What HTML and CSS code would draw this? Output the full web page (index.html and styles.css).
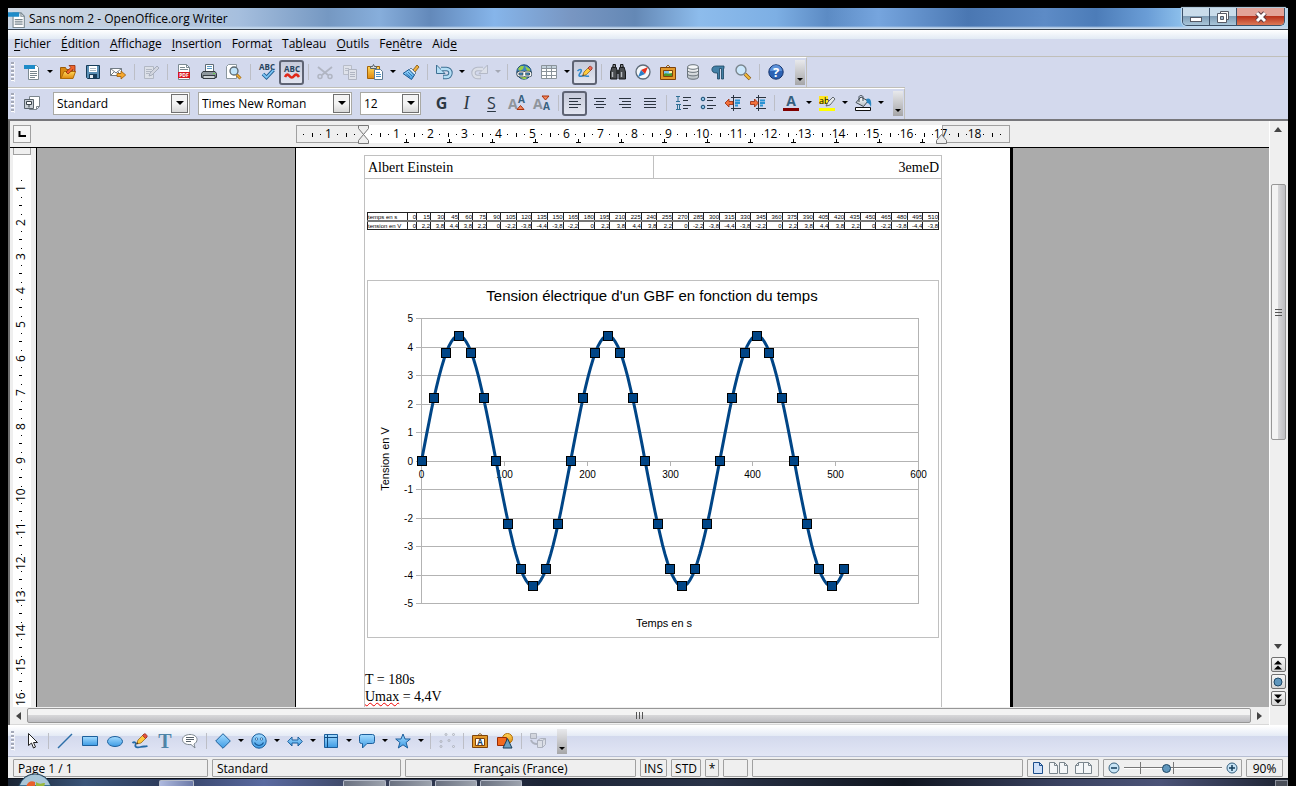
FILE: index.html
```html
<!DOCTYPE html>
<html lang="fr">
<head>
    <meta charset="UTF-8">
    <meta name="viewport" content="width=device-width, initial-scale=1.0">
    <title>Sans nom 2 - OpenOffice.org Writer</title>
    <link rel="stylesheet" href="styles.css">
</head>
<body>
    <!-- Shared gradients for the icons -->
    <svg class="defs" width="0" height="0" aria-hidden="true">
        <defs>
            <linearGradient id="blue" x1="0" y1="0" x2="0" y2="1"><stop offset="0" stop-color="#a5dcff"/><stop offset="1" stop-color="#3d9be4"/></linearGradient>
            <linearGradient id="gold" x1="0" y1="0" x2="0" y2="1"><stop offset="0" stop-color="#ffd85a"/><stop offset="1" stop-color="#e08a10"/></linearGradient>
            <linearGradient id="metal" x1="0" y1="0" x2="0" y2="1"><stop offset="0" stop-color="#ffffff"/><stop offset="1" stop-color="#b4bcc2"/></linearGradient>
        </defs>
    </svg>

    <div class="window">
        <header class="titlebar">
            <svg width="18" height="18" viewBox="0 0 16 16"><path d="M4.500 2.500h7l3 3v10h-10z" fill="#fff" stroke="#7c8a92"/><path d="M11.500 2.500v3h3" fill="none" stroke="#7c8a92"/><path d="M0 2h10v4H0z" fill="#1e8bc8"/><path d="M6 8.500h7M6 10.500h7M6 12.500h7" stroke="#75848c"/></svg>
            <span class="title">Sans nom 2 - OpenOffice.org Writer</span>
            <div class="win-buttons">
                <button class="win-min" aria-label="Réduire"><svg width="14" height="12" viewBox="0 0 14 12"><rect x="1.500" y="6.500" width="11" height="4" fill="#fff" stroke="#555a66"/></svg></button>
                <button class="win-max" aria-label="Niveau inférieur"><svg width="14" height="14" viewBox="0 0 14 14"><path d="M4.500 1.500h8v8h-8z" fill="#fff" stroke="#555a66"/><path d="M1.500 3.500h9v9h-9z" fill="#fff" stroke="#555a66"/><path d="M4.500 6.500h3v3h-3z" fill="#9fb8cc" stroke="#555a66"/></svg></button>
                <button class="win-close" aria-label="Fermer"><svg width="14" height="12" viewBox="0 0 14 12"><path d="M3 2l8 8M11 2l-8 8" stroke="#5b3a40" stroke-width="5"/><path d="M3 2l8 8M11 2l-8 8" stroke="#fff" stroke-width="3"/></svg></button>
            </div>
        </header>

        <nav class="menubar">
            <button><u>F</u>ichier</button>
            <button><u>É</u>dition</button>
            <button><u>A</u>ffichage</button>
            <button><u>I</u>nsertion</button>
            <button>Forma<u>t</u></button>
            <button>Ta<u>b</u>leau</button>
            <button><u>O</u>utils</button>
            <button>Fe<u>n</u>être</button>
            <button>Aid<u>e</u></button>
        </nav>

        <!-- Standard toolbar -->
        <div class="toolbar">
            <span class="grip"></span>
            <button class="tool" aria-label="Nouveau"><svg viewBox="0 0 16 16"><path d="M4.500 1.500h8l2 2v12h-10z" fill="#fff" stroke="#7c8a92"/><path d="M0 1h11v4H0z" fill="#1e8bc8"/><path d="M6 7.500h7M6 9.500h7M6 11.500h7M6 13.500h5" stroke="#75848c"/></svg></button>
            <button class="arrow" aria-label="Types de document"></button>
            <button class="tool" aria-label="Ouvrir"><svg viewBox="0 0 16 16"><path d="M.5 14.500v-11h5l1 2h6v9z" fill="#d98a12" stroke="#9c5b06"/><path d="M1 14.500l3-7h11.500l-2.500 7z" fill="url(#gold)" stroke="#b06c08"/><path d="M6 8l5-4.500L9 1.500h6v6l-2-2L8 10z" fill="#f0642c" stroke="#8c2a08" stroke-width=".8"/></svg></button>
            <button class="tool" aria-label="Enregistrer"><svg viewBox="0 0 16 16"><path d="M1.500 1.500h13v13h-12l-1-1z" fill="#5a8fb5" stroke="#173c58"/><path d="M4 2h8v6H4z" fill="#fff"/><path d="M5 4.500h6M5 6.500h6" stroke="#a9b8c2"/><path d="M4 10h8v4.500H4z" fill="#173c58"/><path d="M5 11h3v3H5z" fill="#e4ecf2"/></svg></button>
            <button class="tool" aria-label="E-mail"><svg viewBox="0 0 16 16"><path d="M.5 4.500h11v7H.5z" fill="#fff" stroke="#717b84"/><path d="M.5 4.500L6 9l5.500-4.500M.5 11.500l4-4M11.500 11.500l-4-4" fill="none" stroke="#717b84"/><path d="M7 9.500h4v-2.500l4.700 4-4.700 4v-2.500H7z" fill="#f6a72c" stroke="#9c5b06" stroke-width=".8"/></svg></button>
            <span class="sep"></span>
            <button class="tool off" aria-label="Éditer"><svg viewBox="0 0 16 16"><path d="M1.500 2.500h9v12h-9z" fill="#dfe2e8" stroke="#aab0bb"/><path d="M3 5.500h6M3 7.500h5M3 9.500h3" stroke="#aab0bb"/><path d="M6 12l1-3 7-7 2 2-7 7z" fill="#d2d5dc" stroke="#9da4b0"/></svg></button>
            <span class="sep"></span>
            <button class="tool" aria-label="Exporter au format PDF"><svg viewBox="0 0 16 16"><path d="M2.500 .5h8l3 3v12h-11z" fill="#fff" stroke="#7c8a92"/><path d="M10.500 .5v3h3" fill="none" stroke="#7c8a92"/><path d="M4 3.500h5M4 5.500h8" stroke="#7c8a92"/><path d="M2 8h12v6H2z" fill="#d8141c"/><text x="8" y="13" class="pdf">PDF</text></svg></button>
            <button class="tool" aria-label="Imprimer"><svg viewBox="0 0 16 16"><path d="M4.500 7.500v-7h8v7" fill="#fff" stroke="#5f6b74"/><path d="M6 2.500h5M6 4.500h5" stroke="#5c9cc6"/><path d="M2 7.500h12l1.500 2v4H.5v-4z" fill="#8f989e" stroke="#353c42"/><path d="M2 11.500h12v3H2z" fill="#cdd3d6" stroke="#353c42"/><path d="M12 9h2v1h-2z" fill="#63d047"/></svg></button>
            <button class="tool" aria-label="Aperçu"><svg viewBox="0 0 16 16"><path d="M.5 2.500l2-2h8v14H.5z" fill="#fff" stroke="#8b979f"/><path d="M10.500 10.500l4 4" stroke="#9b6412" stroke-width="3"/><path d="M10.500 10.500l4 4" stroke="#f0b13a" stroke-width="1.500"/><circle cx="8" cy="7" r="4" fill="#bfe3fa" stroke="#5b6870" stroke-width="1.300"/></svg></button>
            <span class="sep"></span>
            <button class="tool" aria-label="Orthographe et grammaire"><svg viewBox="0 0 16 16"><text x="8" y="6" class="abc">ABC</text><path d="M4 10l3.500 3.500L14.500 6" fill="none" stroke="#1f5d92" stroke-width="3.600"/><path d="M4 10l3.500 3.500L14.500 6" fill="none" stroke="#7cc5f5" stroke-width="1.800"/></svg></button>
            <button class="tool on" aria-label="Vérification automatique"><svg viewBox="0 0 16 16"><text x="8" y="8" class="abc">ABC</text><path d="M1 13c1.500-3 3-3 4.500-1s3 2 4.500 0 3-2 5 1" fill="none" stroke="#e02818" stroke-width="2.600"/></svg></button>
            <span class="sep"></span>
            <button class="tool off" aria-label="Couper"><svg viewBox="0 0 16 16"><path d="M1 3l10 8M15 3L5 11" stroke="#a8adb8" stroke-width="1.800"/><circle cx="3" cy="12.500" r="2" fill="none" stroke="#a8adb8" stroke-width="1.500"/><circle cx="13" cy="12.500" r="2" fill="none" stroke="#a8adb8" stroke-width="1.500"/></svg></button>
            <button class="tool off" aria-label="Copier"><svg viewBox="0 0 16 16"><path d="M1.500 1.500h8v9h-8z" fill="#e3e5ea" stroke="#b2b7c0"/><path d="M3 4.500h4M3 6.500h3" stroke="#b2b7c0"/><path d="M6.500 5.500h8v10h-8z" fill="#e3e5ea" stroke="#a8adb8"/><path d="M8 8.500h5M8 10.500h5M8 12.500h5" stroke="#a8adb8"/></svg></button>
            <button class="tool" aria-label="Coller"><svg viewBox="0 0 16 16"><path d="M.5 2.500h12v12H.5z" fill="url(#gold)" stroke="#a56408"/><path d="M3.500 4.500v-2h2l1-2 1 2h2v2z" fill="#d5dade" stroke="#59636b"/><path d="M7.500 5.500h6l2 2v8h-8z" fill="#fff" stroke="#5e7c94"/><path d="M9 8.500h4M9 10.500h5M9 12.500h5" stroke="#4b8fc4"/></svg></button>
            <button class="arrow" aria-label="Collage spécial"></button>
            <button class="tool" aria-label="Pinceau"><svg viewBox="0 0 16 16"><path d="M10 6l4-5 2 2-4 5z" fill="#f0b040" stroke="#7d5208" stroke-width=".8"/><path d="M8 4l5 5-2 2-5-5z" fill="#e8edf2" stroke="#4b6a84" stroke-width=".8"/><path d="M6 5.500l5.500 5.500-3 4.500L0 9.500z" fill="url(#blue)" stroke="#19588f"/><path d="M3 9.500l4 3.500M5 8l4.500 4.500" stroke="#19588f" stroke-width=".7"/></svg></button>
            <span class="sep"></span>
            <button class="tool" aria-label="Annuler"><svg viewBox="0 0 16 16"><path d="M5 5h5.500a3.800 3.800 0 0 1 0 8H7" fill="none" stroke="#3e7093" stroke-width="4.400"/><path d="M.5 1v8.500H9L6 6.500z" fill="#b5def5" stroke="#3e7093"/><path d="M5 5h5.500a3.800 3.800 0 0 1 0 8H7.500" fill="none" stroke="#b5def5" stroke-width="2.400"/></svg></button>
            <button class="arrow" aria-label="Liste des annulations"></button>
            <button class="tool off" aria-label="Restaurer"><svg viewBox="0 0 16 16"><path d="M11 5H5.500a3.800 3.800 0 0 0 0 8H9" fill="none" stroke="#adb2be" stroke-width="4.400"/><path d="M15.500 1v8.500H7l3-3z" fill="#dde1e8" stroke="#adb2be"/><path d="M11 5H5.500a3.800 3.800 0 0 0 0 8h3" fill="none" stroke="#dde1e8" stroke-width="2.400"/></svg></button>
            <button class="arrow pale" aria-label="Liste des restaurations"></button>
            <span class="sep"></span>
            <button class="tool" aria-label="Hyperlien"><svg viewBox="0 0 16 16"><circle cx="8" cy="8" r="7.200" fill="#3c86c4" stroke="#1c4d78"/><path d="M2 5c2-4 5-3 6-3l-1 3-3 2zM9 2l5 3v4l-3-2zM4 13l3-3 5 1-2 4c-3 .5-4-.5-6-2z" fill="#9ccf4a"/><rect x="1.800" y="8" width="7" height="4" rx="2" fill="none" stroke="#33434d" stroke-width="2.600"/><rect x="7.800" y="8" width="7" height="4" rx="2" fill="none" stroke="#33434d" stroke-width="2.600"/><rect x="1.800" y="8" width="7" height="4" rx="2" fill="none" stroke="#fff" stroke-width="1.200"/><rect x="7.800" y="8" width="7" height="4" rx="2" fill="none" stroke="#fff" stroke-width="1.200"/></svg></button>
            <button class="tool" aria-label="Tableau"><svg viewBox="0 0 16 16"><path d="M.5 1.500h15v13H.5z" fill="#fff" stroke="#8a939a"/><path d="M1 2h14v2H1z" fill="#c4d2dc"/><path d="M.5 4.500h15M.5 7.500h15M.5 11.500h15M5.500 1.500v13M10.500 1.500v13" stroke="#8a939a"/></svg></button>
            <button class="arrow" aria-label="Taille du tableau"></button>
            <button class="tool on" aria-label="Afficher les fonctions de dessin"><svg viewBox="0 0 16 16"><path d="M.5 7c3-3 5-1 3 1.500S1 13 5 12s4 1 7 0" fill="none" stroke="#2f87cc" stroke-width="1.600"/><path d="M5.500 12l1.500-4 5.500-5.500 2.500 2.500L9.500 10.500z" fill="#ffcc3c" stroke="#8a5a10" stroke-width=".7"/><path d="M11 4l1.500-1.500c1-1 3.500 1 2.500 2.500L13.500 6.500z" fill="#ee6a58" stroke="#8a2a20" stroke-width=".7"/><path d="M5.500 12l.7-1.800 1 1z" fill="#333"/></svg></button>
            <span class="sep"></span>
            <button class="tool" aria-label="Rechercher &amp; remplacer"><svg viewBox="0 0 16 16"><path d="M2 3h4l1 3v9H.5V8zM10 3h4l1.500 5v7H9V6z" fill="#4a4d50" stroke="#16181a"/><path d="M3 .5h2.500v3H3zM10.500 .5H13v3h-2.500z" fill="#85898c" stroke="#16181a"/><path d="M6.500 6h3v4h-3z" fill="#2b2e30"/><path d="M2.500 8v5M11.500 8v5" stroke="#b8bcc0" stroke-width="1.400"/></svg></button>
            <button class="tool" aria-label="Navigateur"><svg viewBox="0 0 16 16"><circle cx="8" cy="8" r="7" fill="#f4f7fa" stroke="#5d6b78" stroke-width="1.300"/><path d="M13 3L6 6l4 4z" fill="#e8321e"/><path d="M3 13l3-7 4 4z" fill="#2a7fc8"/></svg></button>
            <button class="tool" aria-label="Gallery"><svg viewBox="0 0 16 16"><path d="M5 4l3-3 3 3" fill="none" stroke="#96601a"/><path d="M.5 3.500h15v12H.5z" fill="#e39a2b" stroke="#7f430a"/><path d="M3.500 6.500h9v6h-9z" fill="#7cc3f0" stroke="#7f430a"/><path d="M4 10c2-2 4 1 8-1v3H4z" fill="#4e9a2a"/><path d="M9 7h3v2H9z" fill="#fff7a0"/></svg></button>
            <button class="tool" aria-label="Sources de données"><svg viewBox="0 0 16 16"><path d="M2.500 3v10c0 3 11 3 11 0V3" fill="url(#metal)" stroke="#6b757c"/><ellipse cx="8" cy="3" rx="5.500" ry="2.300" fill="#f4f6f8" stroke="#6b757c"/><path d="M2.500 6.500c0 2.500 11 2.500 11 0M2.500 10c0 2.500 11 2.500 11 0" fill="none" stroke="#6b757c"/></svg></button>
            <button class="tool" aria-label="Caractères non imprimables"><svg viewBox="0 0 16 16"><path d="M14 2H6C.5 2 .5 9 6 9h1.500v6h2V4.500h2V15h2V4.500H14z" fill="#4280a6" stroke="#1b4460" stroke-width=".8"/></svg></button>
            <button class="tool" aria-label="Zoom"><svg viewBox="0 0 16 16"><path d="M10 10l5 5" stroke="#8a5a10" stroke-width="3.600"/><path d="M10 10l4.700 4.700" stroke="#f4bb3c" stroke-width="2"/><circle cx="6" cy="6" r="5" fill="#cbe7fb" stroke="#7a858c" stroke-width="1.400"/></svg></button>
            <span class="sep"></span>
            <button class="tool" aria-label="Aide"><svg viewBox="0 0 16 16"><circle cx="8" cy="8" r="7.200" fill="#2c62b4" stroke="#15336c"/><path d="M2 7a6 6 0 0 1 12 0z" fill="#5d92da"/><text x="8" y="13" class="help">?</text></svg></button>
            <button class="more" aria-label="Autres boutons"></button>
        </div>

        <!-- Formatting toolbar -->
        <div class="toolbar">
            <span class="grip"></span>
            <button class="tool" aria-label="Styles et formatage"><svg viewBox="0 0 16 16"><path d="M5.500 1.500h10v10l-3 3h-7z" fill="#fff" stroke="#7b858d"/><path d="M15.500 11.500h-3v3" fill="none" stroke="#7b858d"/><path d="M.5 4.500h9v9h-9z" fill="#c8ced4" stroke="#59636b"/><path d="M2.500 6.500h5v3h-5zM5 9.500v3" fill="#fff" stroke="#3b444b"/></svg></button>
            <div class="combo combo-style"><select aria-label="Appliquer le style"><option>Standard</option></select><span class="drop"></span></div>
            <div class="combo combo-font"><select aria-label="Nom de police"><option>Times New Roman</option></select><span class="drop"></span></div>
            <div class="combo combo-size"><select aria-label="Taille de police"><option>12</option></select><span class="drop"></span></div>
            <button class="tool letter bold">G</button>
            <button class="tool letter italic">I</button>
            <button class="tool letter under">S</button>
            <button class="tool" aria-label="Augmenter la police"><svg viewBox="0 0 16 16"><text x="-1" y="14" class="big-a">A</text><text x="9" y="8" class="small-a">A</text><path d="M8 14.500l3.500-4 3.500 4z" fill="#f4855a" stroke="#a8320c"/></svg></button>
            <button class="tool" aria-label="Réduire la police"><svg viewBox="0 0 16 16"><text x="-1" y="14" class="big-a">A</text><text x="9" y="15" class="small-a">A</text><path d="M8 1h7l-3.500 4z" fill="#f4855a" stroke="#a8320c"/></svg></button>
            <span class="sep"></span>
            <button class="tool on" aria-label="Aligner à gauche"><svg viewBox="0 0 16 16"><path d="M2 3.500h12M2 6.500h9M2 9.500h12M2 12.500h9" stroke="#2b3440"/></svg></button>
            <button class="tool" aria-label="Centrer"><svg viewBox="0 0 16 16"><path d="M2 3.500h12M4 6.500h8M2 9.500h12M4 12.500h8" stroke="#2b3440"/></svg></button>
            <button class="tool" aria-label="Aligner à droite"><svg viewBox="0 0 16 16"><path d="M2 3.500h12M5 6.500h9M2 9.500h12M5 12.500h9" stroke="#2b3440"/></svg></button>
            <button class="tool" aria-label="Justifié"><svg viewBox="0 0 16 16"><path d="M2 3.500h12M2 6.500h12M2 9.500h12M2 12.500h12" stroke="#2b3440"/></svg></button>
            <span class="sep"></span>
            <button class="tool" aria-label="Numérotation"><svg viewBox="0 0 16 16"><path d="M1 1.500h4M3 2v4M1 6.500h4M1 9.500h5M2.500 10v4M4.500 10v4M1 14.500h5" stroke="#2f6f94"/><path d="M8 2.500h8M8 5.500h5M8 10.500h8M8 13.500h5" stroke="#2b3440"/></svg></button>
            <button class="tool" aria-label="Puces"><svg viewBox="0 0 16 16"><circle cx="3" cy="4" r="1.800" fill="#8dc4e6" stroke="#174a70"/><circle cx="3" cy="12" r="1.800" fill="#8dc4e6" stroke="#174a70"/><path d="M7 2.500h9M7 5.500h6M7 10.500h9M7 13.500h6" stroke="#2b3440"/></svg></button>
            <button class="tool" aria-label="Réduire le retrait"><svg viewBox="0 0 16 16"><path d="M6 2.500h10M6 13.500h10M8.500 0v16" stroke="#2b3440"/><path d="M10 5.500h5M10 8h5M10 10.500h3" stroke="#2a93d4" stroke-width="2"/><path d="M0 8l4-4v2.500h4v3H4V12z" fill="#f4703a" stroke="#96280a" stroke-width=".8"/></svg></button>
            <button class="tool" aria-label="Augmenter le retrait"><svg viewBox="0 0 16 16"><path d="M6 2.500h10M6 13.500h10M8.500 0v16" stroke="#2b3440"/><path d="M10 5.500h5M10 8h5M10 10.500h3" stroke="#2a93d4" stroke-width="2"/><path d="M8.500 8l-4-4v2.500h-4v3h4V12z" fill="#f4703a" stroke="#96280a" stroke-width=".8"/></svg></button>
            <span class="sep"></span>
            <button class="tool" aria-label="Couleur de police"><svg viewBox="0 0 16 16"><text x="8" y="11" class="mid-a">A</text><path d="M0 13h16v3H0z" fill="#800000"/></svg></button>
            <button class="arrow" aria-label="Choix de la couleur"></button>
            <button class="tool" aria-label="Surlignage"><svg viewBox="0 0 16 16"><path d="M0 1h9v8H0z" fill="#ffe620"/><text x="0" y="9" class="hl">ab</text><path d="M7 11l2-4 5-5 2 2-5 6z" fill="#e4e8ea" stroke="#565e64" stroke-width=".9"/><path d="M0 13h16v3H0z" fill="#ffff00"/></svg></button>
            <button class="arrow" aria-label="Choix du surlignage"></button>
            <button class="tool" aria-label="Couleur d'arrière-plan"><svg viewBox="0 0 16 16"><path d="M1 7.500L6 2l7 4-4.500 5.500z" fill="url(#metal)" stroke="#3f4a52"/><path d="M4 7V2c0-2 4-2 4 0v4" fill="none" stroke="#3f4a52"/><path d="M11 4c4-2 6 1 5 8-1-2-2-4-4-4z" fill="#2a86c0"/><path d="M.5 12.500h15v3H.5z" fill="#fff" stroke="#111"/></svg></button>
            <button class="arrow" aria-label="Choix de l'arrière-plan"></button>
            <button class="more" aria-label="Autres boutons"></button>
        </div>

        <!-- Document window: rulers, page, scroll bars -->
        <main class="editor">
            <div class="view">
                <div class="ruler-row">
                    <button class="tab-type" aria-label="Type de tabulation"><svg width="8" height="8" viewBox="0 0 8 8"><path d="M1.500 1v5H8" fill="none" stroke="#000" stroke-width="2"/></svg></button>
                    <div class="ruler-space">
                        <div class="hruler">
                            <span class="out out-left"></span>
                            <span class="out out-right"></span>
                            <div class="hnumbers" id="hnumbers"></div>
                            <span class="tabs"></span>
                            <svg class="indent indent-left" width="12" height="19" viewBox="0 0 12 19"><path d="M.5 .5h10v3l-5 6 5 6v3H.5v-3l5-6-5-6z" fill="#eee" stroke="#777"/></svg>
                            <svg class="indent indent-right" width="12" height="19" viewBox="0 0 12 19"><path d="M5.500 9.500l5 6v3H.5v-3z" fill="#eee" stroke="#777"/></svg>
                        </div>
                    </div>
                </div>
                <div class="doc-row">
                    <div class="vruler"><span class="vout"></span><div class="vnumbers" id="vnumbers"></div></div>
                    <div class="canvas">
                        <article class="page">
                            <div class="text-area">
                                <div class="doc-header"><span>Albert Einstein</span><span class="right">3emeD</span></div>
                                <table class="data">
                                    <colgroup id="cols"><col class="c-name"><col class="c-zero"></colgroup>
                                    <tbody>
                                        <tr id="row-t"><th scope="row">temps en s</th></tr>
                                        <tr id="row-u"><th scope="row">tension en V</th></tr>
                                    </tbody>
                                </table>
                                <figure class="chart">
                                    <svg id="chart" viewBox="0 0 570 356">
                                        <text x="284" y="20" class="c-title">Tension électrique d'un GBF en fonction du temps</text>
                                        <text x="296" y="346" class="c-axis">Temps en s</text>
                                        <text transform="translate(21 178) rotate(-90)" class="c-axis">Tension en V</text>
                                    </svg>
                                </figure>
                                <div class="notes">
                                    <p>T = 180s</p>
                                    <p><span class="typo">Umax</span> = 4,4V</p>
                                </div>
                            </div>
                        </article>
                    </div>
                </div>
                <div class="hscroll">
                    <button class="sb" aria-label="Gauche"><svg width="5" height="8" viewBox="0 0 5 8"><path d="M5 0v8L0 4z" fill="#444"/></svg></button>
                    <div class="hthumb"><i></i><i></i><i></i></div>
                    <button class="sb" aria-label="Droite"><svg width="5" height="8" viewBox="0 0 5 8"><path d="M0 0v8l5-4z" fill="#444"/></svg></button>
                </div>
            </div>
            <div class="vscroll">
                <button class="sb" aria-label="Haut"><svg width="8" height="5" viewBox="0 0 8 5"><path d="M0 5h8L4 0z" fill="#444"/></svg></button>
                <div class="vtrack"><div class="vthumb"><i></i><i></i><i></i></div></div>
                <button class="sb" aria-label="Bas"><svg width="8" height="5" viewBox="0 0 8 5"><path d="M0 0h8L4 5z" fill="#444"/></svg></button>
                <button class="jump" aria-label="Page précédente"><svg width="8" height="10" viewBox="0 0 8 10"><path d="M0 4.500h8L4 .5zM0 9.500h8L4 5.500z"/></svg></button>
                <button class="jump" aria-label="Navigation"><svg width="10" height="10" viewBox="0 0 10 10"><circle cx="5" cy="5" r="4" fill="#5f96bc" stroke="#1f4866"/></svg></button>
                <button class="jump" aria-label="Page suivante"><svg width="8" height="10" viewBox="0 0 8 10"><path d="M0 .5h8L4 4.500zM0 5.500h8L4 9.500z"/></svg></button>
            </div>
        </main>

        <!-- Drawing toolbar -->
        <div class="toolbar drawbar">
            <span class="grip"></span>
            <button class="tool" aria-label="Sélection"><svg viewBox="0 0 16 16"><path d="M4.500 .5v12l3-2.500 2 5 2-1-2-4.500h4z" fill="#fff" stroke="#222"/></svg></button>
            <span class="sep"></span>
            <button class="tool" aria-label="Ligne"><svg viewBox="0 0 16 16"><path d="M1 15L15 1" stroke="#2d6fa8" stroke-width="1.400"/></svg></button>
            <button class="tool" aria-label="Rectangle"><svg viewBox="0 0 16 16"><path d="M.5 3.500h15v9H.5z" fill="url(#blue)" stroke="#1c5f9c"/></svg></button>
            <button class="tool" aria-label="Ellipse"><svg viewBox="0 0 16 16"><ellipse cx="8" cy="8.500" rx="7.500" ry="5" fill="url(#blue)" stroke="#1c5f9c"/></svg></button>
            <button class="tool" aria-label="Ligne à main levée"><svg viewBox="0 0 16 16"><path d="M.5 10c2-2 4 0 3 2s2 3 5 2 4 0 7-1" fill="none" stroke="#246ba8" stroke-width="1.800"/><path d="M4.500 11l1.500-4 6-6 3 3-6 6z" fill="#ffc83c" stroke="#8a5a10" stroke-width=".7"/><path d="M10.500 2.500L12 1c1-1 4 1.500 3 3l-1.500 1.500z" fill="#e4523e" stroke="#8a2a20" stroke-width=".7"/><path d="M4.500 11l.7-1.800 1.200 1.200z" fill="#222"/></svg></button>
            <button class="tool" aria-label="Texte"><svg viewBox="0 0 16 16"><text x="8" y="15" class="tee">T</text></svg></button>
            <button class="tool" aria-label="Légende"><svg viewBox="0 0 16 16"><path d="M8 1.500c4 0 7 2 7 5 0 2-1 3.500-3 4.500l1 4-4-3.500c-5 .5-8.500-1.500-8.500-5 0-3 3.500-5 7.500-5z" fill="#fff" stroke="#7d878f"/><path d="M4 4.500h8M4 6.500h8M4 8.500h5" stroke="#56616a"/></svg></button>
            <span class="sep"></span>
            <button class="tool" aria-label="Formes de base"><svg viewBox="0 0 16 16"><path d="M8 .7L15.300 8 8 15.300.7 8z" fill="url(#blue)" stroke="#1c5f9c"/></svg></button>
            <button class="arrow" aria-label="Plus de formes de base"></button>
            <button class="tool" aria-label="Formes des symboles"><svg viewBox="0 0 16 16"><circle cx="8" cy="8" r="7.200" fill="url(#blue)" stroke="#1c5f9c"/><circle cx="5.500" cy="6" r="1.200" fill="#e6f5ff" stroke="#1c5f9c" stroke-width=".8"/><circle cx="10.500" cy="6" r="1.200" fill="#e6f5ff" stroke="#1c5f9c" stroke-width=".8"/><path d="M3.500 9.500c2 4 7 4 9 0" fill="none" stroke="#1c5f9c" stroke-width="1.200"/></svg></button>
            <button class="arrow" aria-label="Plus de symboles"></button>
            <button class="tool" aria-label="Flèches pleines"><svg viewBox="0 0 16 16"><path d="M.7 8.500l4.300-4.500v3h6V4l4.300 4.500L11 13v-3H5v3z" fill="url(#blue)" stroke="#1c5f9c"/></svg></button>
            <button class="arrow" aria-label="Plus de flèches"></button>
            <button class="tool" aria-label="Diagrammes"><svg viewBox="0 0 16 16"><path d="M1.500 1.500h13v13h-13z" fill="url(#blue)" stroke="#1c5f9c"/><path d="M1.500 4.500h13M4.500 1.500v13" stroke="#0f4a80"/></svg></button>
            <button class="arrow" aria-label="Plus de diagrammes"></button>
            <button class="tool" aria-label="Légendes"><svg viewBox="0 0 16 16"><path d="M2.500 1.500h11q2 0 2 2v5q0 2-2 2H8L3.500 15v-4.500h-1q-2 0-2-2v-5q0-2 2-2z" fill="url(#blue)" stroke="#1c5f9c"/></svg></button>
            <button class="arrow" aria-label="Plus de légendes"></button>
            <button class="tool" aria-label="Étoiles"><svg viewBox="0 0 16 16"><path d="M8 1l2 5h5.300l-4.200 3.500 1.600 5.500L8 11.800 3.300 15l1.600-5.500L.7 6H6z" fill="url(#blue)" stroke="#1c5f9c"/></svg></button>
            <button class="arrow" aria-label="Plus d'étoiles"></button>
            <span class="sep"></span>
            <button class="tool off" aria-label="Points"><svg viewBox="0 0 16 16"><g fill="#e4e6ea" stroke="#a2a7b2"><circle cx="7" cy="1.500" r="1"/><circle cx="14.500" cy="1.500" r="1"/><circle cx="10" cy="7.500" r="1"/><circle cx="2" cy="8.500" r="1"/><circle cx="2" cy="13.500" r="1"/><circle cx="14.500" cy="13.500" r="1"/></g></svg></button>
            <span class="sep"></span>
            <button class="tool" aria-label="Galerie Fontwork"><svg viewBox="0 0 16 16"><path d="M5 3l3-2.500L11 3" fill="none" stroke="#96601a"/><path d="M.5 2.500h15v12H.5z" fill="#e39a2b" stroke="#7f430a"/><path d="M3.500 5.500h9v7h-9z" fill="#fff" stroke="#7f430a"/><text x="8" y="12" class="fw">A</text></svg></button>
            <button class="tool" aria-label="À partir d'un fichier"><svg viewBox="0 0 16 16"><circle cx="10.500" cy="5.500" r="5" fill="url(#gold)" stroke="#b06c08"/><path d="M.5 4.500h9v8h-9z" fill="#f26a1e" stroke="#9a2c04"/><path d="M10.500 5.500l4.500 9.500H6z" fill="#6ea0c0" stroke="#183e5a"/></svg></button>
            <span class="sep"></span>
            <button class="tool off" aria-label="Extrusion"><svg viewBox="0 0 16 16"><path d="M.5 .5h6v5h-6z" fill="#cfd2d9" stroke="#a2a7b2"/><path d="M1 7c1 3 3 4 6 4" fill="none" stroke="#a2a7b2" stroke-width="2"/><path d="M7.500 7.500l3-2h5v6l-3 3h-5z" fill="#dcdfe4" stroke="#a2a7b2"/><path d="M7.500 7.500h5v7M12.500 7.500l3-2" fill="none" stroke="#a2a7b2"/></svg></button>
            <button class="more" aria-label="Autres boutons"></button>
        </div>

        <footer class="status">
            <span class="cell s-page">Page 1 / 1</span>
            <span class="cell s-style">Standard</span>
            <span class="cell s-lang">Français (France)</span>
            <span class="cell s-ins">INS</span>
            <span class="cell s-std">STD</span>
            <span class="cell s-mod">*</span>
            <span class="cell s-sign"></span>
            <span class="cell s-fill"></span>
            <span class="cell s-views">
                <button aria-label="Une page"><svg width="10" height="12" viewBox="0 0 10 12"><path d="M.5 .5h6l3 3v8h-9z" fill="#cfe0f8" stroke="#1c4e8c"/><path d="M6.500 .5v3h3" fill="none" stroke="#1c4e8c"/></svg></button>
                <button aria-label="Plusieurs pages"><svg width="20" height="12" viewBox="0 0 20 12"><path d="M.5 .5h5l3 3v8h-8zM10.500 .5h5l3 3v8h-8z" fill="#f4f6f8" stroke="#7b868e"/><path d="M5.500 .5v3h3M15.500 .5v3h3" fill="none" stroke="#7b868e"/></svg></button>
                <button aria-label="Mode livre"><svg width="18" height="12" viewBox="0 0 18 12"><path d="M3.500 .5h5v11h-8v-8zM8.500 .5h5l3 3v8h-8z" fill="#f4f6f8" stroke="#7b868e"/><path d="M3.500 .5v3h-3M13.500 .5v3h3" fill="none" stroke="#7b868e"/></svg></button>
            </span>
            <span class="cell s-zoom">
                <button aria-label="Zoom arrière"><svg width="12" height="12" viewBox="0 0 12 12"><circle cx="6" cy="6" r="5" fill="#c8e4f6" stroke="#37617f"/><path d="M3 6h6" stroke="#143c5a" stroke-width="1.500"/></svg></button>
                <input type="range" min="0" max="100" value="43" aria-label="Facteur de zoom">
                <button aria-label="Zoom avant"><svg width="12" height="12" viewBox="0 0 12 12"><circle cx="6" cy="6" r="5" fill="#c8e4f6" stroke="#37617f"/><path d="M3 6h6M6 3v6" stroke="#143c5a" stroke-width="1.500"/></svg></button>
            </span>
            <span class="cell s-percent">90%</span>
        </footer>
    </div>

    <!-- Top edge of the Windows taskbar -->
    <div class="taskbar">
        <svg class="orb" width="36" height="36" viewBox="0 0 36 36"><circle cx="18" cy="18" r="17" fill="#3c6f92" stroke="#24394c"/><path d="M3 12a16 16 0 0 1 30 0z" fill="#a9c6d8"/><path d="M9 16c0-7 5-9 9-7v8z" fill="#e8602c"/><path d="M19 9c4 3 6 1 9 1l-2 8-7-1z" fill="#98b83c"/></svg>
        <span class="task t1"></span><span class="task t2"></span><span class="task t2"></span><span class="task t3"></span><span class="task t3"></span>
        <span class="desktop"></span>
    </div>

    <script src="script.js"></script>
</body>
</html>
```
FILE: styles.css
```css
* {
    box-sizing: border-box;
}

body {
    margin: 0;
    height: 100vh;
    display: flex;
    flex-direction: column;
    padding: 8px 8px 0;
    background: #000;
    color: #000;
    font-family: "Open Sans", "Noto Sans", sans-serif;
    font-size: 12px;
    overflow: hidden;
}

.defs {
    position: absolute;
}

button {
    margin: 0;
    padding: 0;
    border: none;
    background: none;
    font: inherit;
    color: inherit;
}

.window {
    flex: 1;
    min-height: 0;
    display: flex;
    flex-direction: column;
    background: #d3d9ed;
}

/* Title bar */
.titlebar {
    display: flex;
    align-items: center;
    height: 22px;
    padding-right: 3px;
    border-bottom: 1px solid #38434f;
    background:
        linear-gradient(#0000 18px, #c5d8ec 20px),
        linear-gradient(90deg, #cfd8e3 0, #bccbdd 12%, #a6bfde 18%, #7598c2 25%, #87aedb 29%, #6389ba 33%, #86b5ea 38%, #7896c2 44%, #6488b5 49%, #8dbcec 54%, #7dafe4 60%, #5c8bc4 64%, #76a5de 68%, #4a77b2 75%, #5d8bc6 81%, #4c7cb8 85%, #6a9dd6 89%, #9dd0f6 93%, #b8d5ea 100%);
}

.title {
    flex: 1;
    padding-left: 3px;
}

.win-buttons {
    display: flex;
    align-self: flex-start;
    height: 18px;
    border: 1px solid #3c5068;
    border-top: none;
    border-radius: 0 0 5px 5px;
    overflow: hidden;
    box-shadow: 0 0 1px 1px #c3dcef;
}

.win-buttons button {
    display: flex;
    align-items: center;
    justify-content: center;
    background: linear-gradient(#c9dcea 45%, #7f9db5 50%, #a9c6da);
}

.win-buttons .win-min,
.win-buttons .win-max {
    width: 27px;
    border-right: 1px solid #3c5068;
}

.win-buttons .win-close {
    width: 47px;
    background: linear-gradient(#e3a398 45%, #b8321c 50%, #dc7a58);
}

/* Menu bar */
.menubar {
    display: flex;
    height: 27px;
    padding-left: 1px;
    border-bottom: 1px solid #c0bfb9;
    background: linear-gradient(#fff, #e2eaf4 9px, #d3d9ed 9px);
}

.menubar button {
    padding: 0 5px;
}

.menubar u {
    text-underline-offset: 2px;
}

/* Toolbars */
.toolbar {
    display: flex;
    align-items: center;
    align-self: flex-start;
    height: 31px;
    padding: 0 0 2px 3px;
    border-top: 1px solid #fff;
    border-right: 1px solid #c0bfb9;
}

.toolbar + .toolbar {
    box-shadow: 0 -1px #c0bfb9;
}

.grip {
    width: 4px;
    height: 20px;
    margin-right: 4px;
    background: repeating-linear-gradient(#a4a9b8 0 2px, #fff 2px 3px, #0000 3px 4px);
    border-right: 1px solid #eef0f8;
}

.tool {
    display: flex;
    align-items: center;
    justify-content: center;
    width: 25px;
    height: 25px;
}

.tool svg {
    width: 16px;
    height: 16px;
    overflow: visible;
}

.tool.on {
    border: 2px solid #5f6474;
    border-radius: 3px;
    background: linear-gradient(#c6cada, #e2e5f0);
}

.tool.off {
    opacity: 0.8;
}

.arrow {
    width: 11px;
    height: 25px;
}

.arrow::before {
    content: "";
    display: block;
    width: 0;
    margin: 0 auto 2px;
    border: 3px solid transparent;
    border-top-color: #000;
    border-bottom: none;
}

.arrow.pale::before {
    border-top-color: #a4a8b4;
}

.sep {
    width: 1px;
    height: 16px;
    margin: 0 3px 0 4px;
    background: #bcbec6;
}

.more {
    width: 10px;
    height: 25px;
    margin: 0 1px 0 7px;
    padding-top: 15px;
    background: linear-gradient(#e8e9ec, #a6a6a8);
}

.more::before {
    content: "";
    display: block;
    width: 0;
    margin: 0 auto;
    border: 3px solid transparent;
    border-top-color: #000;
    border-bottom: none;
}

/* Lettering inside the icons */
.pdf, .abc, .help, .mid-a, .tee, .fw {
    text-anchor: middle;
    font-weight: bold;
}

.pdf {
    font-size: 5px;
    fill: #fff;
}

.abc {
    font-size: 8px;
    fill: #27425c;
}

.help {
    font-size: 13px;
    fill: #fff;
}

.big-a {
    font-size: 14px;
    font-weight: bold;
    fill: #8f959c;
}

.small-a {
    font-size: 10px;
    font-weight: bold;
    fill: #35607f;
}

.mid-a {
    font-size: 14px;
    fill: #35607f;
}

.hl {
    font-size: 9px;
}

.tee {
    font-family: "Liberation Serif", serif;
    font-size: 20px;
    fill: #4e84a8;
}

.fw {
    font-size: 8px;
    fill: #1f4460;
}

.letter {
    font-size: 16px;
    line-height: 20px;
    color: #2c3844;
}

.bold {
    font-weight: bold;
}

.italic {
    font-family: "Liberation Serif", serif;
    font-style: italic;
    font-size: 18px;
}

.under {
    text-decoration: underline;
    text-underline-offset: 2px;
}

/* Drop-down lists of the formatting toolbar */
.combo {
    display: flex;
    height: 23px;
    margin-right: 8px;
    padding: 1px;
    border: 1px solid #a9a9a4;
    background: #fff;
}

.combo select {
    flex: 1;
    min-width: 0;
    padding: 0 2px;
    border: none;
    appearance: none;
    background: #fff;
    color: #000;
    font: inherit;
}

.combo-style {
    width: 137px;
    margin-left: 9px;
}

.combo-font {
    width: 154px;
}

.combo-size {
    width: 61px;
}

.drop {
    display: flex;
    align-items: center;
    justify-content: center;
    width: 17px;
    border: 1px solid #707070;
    background: linear-gradient(#f4f4f4 50%, #d8d8d8);
}

.drop::before {
    content: "";
    border: 4px solid transparent;
    border-top-color: #000;
    border-bottom: none;
}

/* Editor */
.editor {
    flex: 1;
    min-height: 0;
    display: flex;
    border-top: 2px solid #77777b;
    border-left: 2px solid #6d6d6d;
    background: #efefef;
}

.view {
    flex: 1;
    min-width: 0;
    display: flex;
    flex-direction: column;
}

.ruler-row {
    display: flex;
    height: 27px;
    border-bottom: 1px solid #000;
}

.tab-type {
    display: flex;
    align-items: center;
    justify-content: center;
    width: 18px;
    height: 18px;
    margin: 4px 5px 0 3px;
    border: 1px solid #a0a0a0;
    background: #f6f6f6;
}

.ruler-space {
    flex: 1;
    display: flex;
    justify-content: center;
}

.hruler {
    position: relative;
    width: 714px;
    height: 18px;
    margin-top: 4px;
    background: linear-gradient(90deg, #0000 68px, #fff 68px 646px, #0000 646px);
}

.out {
    position: absolute;
    top: 0;
    height: 18px;
    width: 68px;
    border: 1px solid #a0a0a0;
}

.out-left {
    left: 0;
}

.out-right {
    right: 0;
}

.hnumbers {
    display: flex;
    margin-left: 1px;
    height: 18px;
    overflow: hidden;
}

.hnumbers span {
    flex: none;
    width: 34px;
    line-height: 17px;
    text-align: center;
    background:
        linear-gradient(#000, #000) 0 8px / 1px 4px no-repeat,
        linear-gradient(#000, #000) 8px 9px / 1px 1px no-repeat,
        linear-gradient(#000, #000) 25px 9px / 1px 1px no-repeat;
}

.hnumbers span:first-child {
    margin-left: -19px;
}

.tabs {
    position: absolute;
    left: 108px;
    bottom: 0;
    width: 521px;
    height: 4px;
    background:
        repeating-linear-gradient(90deg, #0000 0 2px, #000 2px 3px, #0000 3px 43px),
        repeating-linear-gradient(90deg, #000 0 5px, #0000 5px 43px) bottom / 100% 1px no-repeat;
}

.indent {
    position: absolute;
    top: 0;
}

.indent-left {
    left: 62px;
}

.indent-right {
    right: 62px;
}

.doc-row {
    flex: 1;
    min-height: 0;
    display: flex;
}

.vruler {
    width: 18px;
    margin: 0 5px 0 3px;
    background: #fff;
    overflow: hidden;
    position: relative;
}

.vout {
    position: absolute;
    top: 0;
    left: 0;
    width: 18px;
    height: 7px;
    border: 1px solid #a0a0a0;
    border-top: none;
    background: #efefef;
}

.vnumbers span {
    display: block;
    width: 18px;
    height: 34px;
    writing-mode: vertical-rl;
    transform: rotate(180deg);
    line-height: 15px;
    text-align: center;
    background:
        linear-gradient(#000, #000) 9px 0 / 3px 1px no-repeat,
        linear-gradient(#000, #000) 9px 8px / 1px 1px no-repeat,
        linear-gradient(#000, #000) 9px 25px / 1px 1px no-repeat;
}

.vnumbers span:first-child {
    margin-top: 24px;
}

.canvas {
    flex: 1;
    min-width: 0;
    border-left: 1px solid #000;
    background: #ababab;
    overflow: hidden;
    display: flex;
    justify-content: center;
}

.page {
    flex: none;
    display: flex;
    width: 714px;
    padding: 7px 68px 0;
    background: #fff;
    box-shadow: -1px 0 #000, 3px 0 #000;
}

.text-area {
    flex: 1;
    min-width: 0;
    border: 1px solid #c0c0c0;
    border-bottom: none;
    font-family: "Liberation Serif", serif;
    font-size: 14px;
}

.doc-header {
    display: grid;
    grid-template-columns: 1fr 1fr;
    height: 23px;
    line-height: 23px;
    border-bottom: 1px solid #c0c0c0;
}

.doc-header span {
    padding: 0 2px 0 3px;
}

.doc-header .right {
    text-align: right;
    border-left: 1px solid #c0c0c0;
}

/* Measurements */
.data {
    width: 572px;
    height: 18px;
    margin: 33px 0 0 2px;
    table-layout: fixed;
    border-collapse: collapse;
    font-family: "Liberation Sans", sans-serif;
    font-size: 6px;
    line-height: 6px;
}

.data th,
.data td {
    padding: 0;
    border: 1px solid #222;
    text-align: right;
    font-weight: normal;
    overflow: hidden;
    white-space: nowrap;
}

.data th {
    text-align: left;
}

.data tr + tr th,
.data tr + tr td {
    border-top: 2px solid #777;
}

.c-name {
    width: 40px;
}

.c-zero {
    width: 9px;
}

.c-two {
    width: 14px;
}

/* Chart */
.chart {
    margin: 50px 2px 0;
    border: 1px solid #c0c0c0;
}

.chart svg {
    display: block;
    width: 100%;
    font-family: "Liberation Sans", sans-serif;
}

.c-title {
    font-size: 15px;
    text-anchor: middle;
}

.c-axis {
    font-size: 11px;
    text-anchor: middle;
}

.c-num {
    font-size: 10px;
    text-anchor: middle;
}

.c-num.y {
    text-anchor: end;
}

.c-grid {
    fill: none;
    stroke: #b3b3b3;
}

.c-line {
    fill: none;
    stroke: #004586;
    stroke-width: 3;
}

.c-dot {
    fill: #004586;
    stroke: #000;
}

.notes {
    margin-top: 33px;
    line-height: 17px;
}

.notes p {
    margin: 0;
}

.typo {
    text-decoration: underline wavy #e00 1px;
    text-decoration-skip-ink: none;
    text-underline-offset: 1px;
}

/* Scroll bars */
.sb {
    display: flex;
    align-items: center;
    justify-content: center;
    width: 17px;
    height: 17px;
}

.hscroll {
    display: flex;
    align-items: center;
    height: 18px;
    padding-right: 1px;
    border-bottom: 1px solid #d8d8d8;
}

.hthumb {
    flex: 1;
    display: flex;
    align-items: center;
    justify-content: center;
    gap: 2px;
    height: 15px;
    border: 1px solid #979797;
    border-radius: 2px;
    background: linear-gradient(#f3f3f3 45%, #d6d6d8 50%, #bdbdc1);
}

.hthumb i {
    width: 1px;
    height: 7px;
    background: #555;
}

.vscroll {
    display: flex;
    flex-direction: column;
    align-items: center;
    width: 19px;
    padding: 0 2px 19px 0;
    border-left: 1px solid #fff;
}

.vtrack {
    flex: 1;
    padding: 46px 0 198px;
    display: flex;
}

.vthumb {
    display: flex;
    flex-direction: column;
    align-items: center;
    justify-content: center;
    gap: 2px;
    width: 15px;
    border: 1px solid #979797;
    border-radius: 2px;
    background: linear-gradient(90deg, #f3f3f3 45%, #d6d6d8 50%, #bdbdc1);
}

.vthumb i {
    width: 7px;
    height: 1px;
    background: #555;
}

.jump {
    display: flex;
    align-items: center;
    justify-content: center;
    width: 15px;
    height: 15px;
    margin-top: 2px;
    border: 1px solid #707070;
    border-radius: 2px;
    background: linear-gradient(#f6f6f6, #d6d6d6);
}

/* Drawing toolbar runs over the full width */
.drawbar {
    align-self: stretch;
    height: 32px;
    padding-bottom: 0;
    border-right: none;
    border-bottom: 1px solid #b6bdd2;
    background: linear-gradient(#fff, #e4eaf5 10px, #d3d9ed 10px, #e2e6f5);
}

/* Status bar */
.status {
    display: flex;
    gap: 4px;
    height: 21px;
    padding: 2px 5px 1px;
    background: #efefef;
}

.cell {
    flex: none;
    display: flex;
    align-items: center;
    justify-content: center;
    border: 1px solid #a0a0a0;
    border-radius: 1px;
    white-space: nowrap;
}

.s-page {
    width: 195px;
    justify-content: flex-start;
    padding-left: 4px;
}

.s-style {
    width: 189px;
    justify-content: flex-start;
    padding-left: 4px;
}

.s-lang {
    width: 231px;
}

.s-ins {
    width: 27px;
}

.s-std {
    width: 30px;
}

.s-mod {
    width: 14px;
}

.s-sign {
    width: 25px;
}

.s-fill {
    flex: 1;
}

.s-views {
    width: 72px;
    gap: 6px;
}

.s-zoom {
    width: 139px;
    gap: 4px;
}

.s-percent {
    width: 37px;
}

.status button {
    display: flex;
}

.s-zoom input {
    width: 98px;
    height: 12px;
    margin: 0;
    appearance: none;
    background:
        linear-gradient(#777, #777) 16px 0 / 1px 12px no-repeat,
        linear-gradient(#777, #777) 49px 0 / 1px 12px no-repeat,
        linear-gradient(#777, #777) 0 5px / 100% 1px no-repeat,
        linear-gradient(#fff, #fff) 0 6px / 100% 1px no-repeat;
}

.s-zoom input::-webkit-slider-thumb {
    appearance: none;
    width: 9px;
    height: 9px;
    border: 1px solid #1f4866;
    border-radius: 50%;
    background: #5f96bc;
}

/* Taskbar */
.taskbar {
    position: relative;
    display: flex;
    gap: 3px;
    height: 8px;
    padding: 1px 0 0 151px;
    border-top: 1px solid #0c1018;
    background: linear-gradient(90deg, #1a2433 0, #3a5478 6%, #2e3c5c 12%, #5a6aa0 20%, #39425c 28%, #1c2436 42%, #2a3348 55%, #10151f 70%, #3a4260 82%, #4c5478 90%, #1c2230);
}

.orb {
    position: absolute;
    top: -6px;
    left: 9px;
}

.task {
    height: 7px;
    border: 1px solid #b4bac8;
    border-bottom: none;
    border-radius: 2px 2px 0 0;
    background: linear-gradient(90deg, #6a7180, #9da3ae);
}

.t1 {
    width: 35px;
    margin-right: 146px;
    background: linear-gradient(90deg, #aeb9de, #6c7aa8);
}

.t2 {
    width: 43px;
}

.t3 {
    width: 42px;
}

.desktop {
    width: 13px;
    margin-left: auto;
    border: 1px solid #8a8f9a;
    border-bottom: none;
    background: #4a4e58;
}
```
FILE: script.js
```js
const SVG = 'http://www.w3.org/2000/svg';
const cycle = [0, 2.2, 3.8, 4.4, 3.8, 2.2, 0, -2.2, -3.8, -4.4, -3.8, -2.2];

// one measurement every 15 s, from 0 to 510
const points = [];
for (let i = 0; i <= 34; i++) {
    points.push({ t: i * 15, u: cycle[i % 12] });
}

// Rulers, one cell per centimetre
function fillRuler(id, from, to) {
    const ruler = document.getElementById(id);
    for (let n = from; n <= to; n++) {
        const cell = document.createElement('span');
        cell.textContent = n === 0 || n < -1 || n > 18 ? '' : Math.abs(n);
        ruler.appendChild(cell);
    }
}
fillRuler('hnumbers', -2, 19);
fillRuler('vnumbers', 1, 16);

// Table
points.forEach((p, i) => {
    if (i > 0) {
        const col = document.createElement('col');
        if (p.t < 100) col.className = 'c-two';
        document.getElementById('cols').appendChild(col);
    }
    document.getElementById('row-t').insertCell().textContent = p.t;
    document.getElementById('row-u').insertCell().textContent = String(p.u).replace('.', ',');
});

// Chart
const chart = document.getElementById('chart');
const px = t => 53.5 + t * 497 / 600;
const py = u => 180 - u * 28.5;

function add(tag, attrs, text) {
    const el = document.createElementNS(SVG, tag);
    for (const key in attrs) el.setAttribute(key, attrs[key]);
    if (text !== undefined) el.textContent = text;
    chart.appendChild(el);
}

for (let v = -5; v <= 5; v++) {
    const y = Math.floor(py(v)) + 0.5;
    add('path', { d: `M48 ${y}H551`, class: 'c-grid' });
    add('text', { x: 45, y: y + 3, class: 'c-num y' }, v);
}
add('path', { d: 'M53.5 37V323M550.5 37V323', class: 'c-grid' });
for (let t = 0; t <= 600; t += 100) {
    const x = Math.floor(px(t)) + 0.5;
    add('path', { d: `M${x} 180v5`, class: 'c-grid' });
    add('text', { x: x, y: 197, class: 'c-num' }, t);
}

let d = '';
for (let t = 0; t <= 510; t += 3) {
    d += (t ? 'L' : 'M') + px(t).toFixed(1) + ' ' + py(4.4 * Math.sin(t * Math.PI / 90)).toFixed(1);
}
add('path', { d: d, class: 'c-line' });
points.forEach(p => {
    add('rect', { x: Math.round(px(p.t)) - 4.5, y: Math.round(py(p.u)) - 4.5, width: 9, height: 9, class: 'c-dot' });
});
```
